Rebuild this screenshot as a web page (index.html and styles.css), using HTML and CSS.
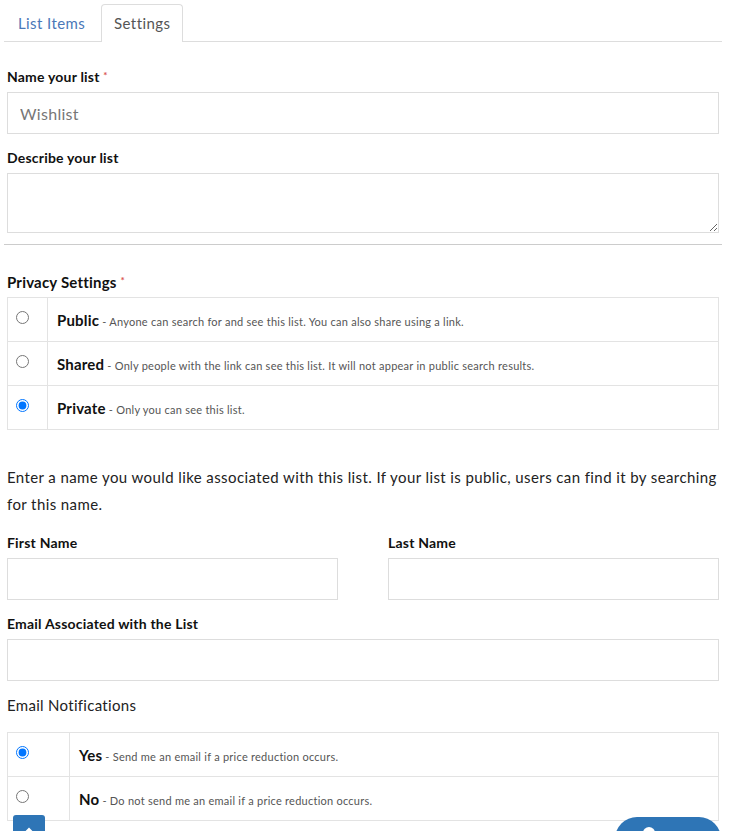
FILE: index.html
```html
<!DOCTYPE html>
<html lang="en">
<head>
<meta charset="utf-8">
<title>List Settings</title>
<link rel="stylesheet" href="styles.css">
</head>
<body>
<div class="page">
  <ul class="tabs">
    <li class="tab"><a href="#">List Items</a></li>
    <li class="tab active"><a href="#">Settings</a></li>
  </ul>
  <form class="form">
    <div class="group">
      <label class="label">Name your list <span class="req">*</span></label>
      <input class="control" type="text" placeholder="Wishlist">
    </div>
    <div class="group">
      <label class="label">Describe your list</label>
      <textarea class="control area"></textarea>
    </div>
    <hr class="rule">
    <div class="group privacy">
      <label class="label">Privacy Settings <span class="req">*</span></label>
      <table class="opts">
        <tr>
          <td class="radio-cell"><input type="radio" name="privacy"></td>
          <td class="text-cell"><strong>Public</strong><span class="desc"> - Anyone can search for and see this list. You can also share using a link.</span></td>
        </tr>
        <tr>
          <td class="radio-cell"><input type="radio" name="privacy"></td>
          <td class="text-cell"><strong>Shared</strong><span class="desc"> - Only people with the link can see this list. It will not appear in public search results.</span></td>
        </tr>
        <tr>
          <td class="radio-cell"><input type="radio" name="privacy" checked></td>
          <td class="text-cell"><strong>Private</strong><span class="desc"> - Only you can see this list.</span></td>
        </tr>
      </table>
    </div>
    <p class="intro">Enter a name you would like associated with this list. If your list is public, users can find it by searching for this name.</p>
    <div class="row">
      <div class="group">
        <label class="label">First Name</label>
        <input class="control" type="text">
      </div>
      <div class="group">
        <label class="label">Last Name</label>
        <input class="control" type="text">
      </div>
    </div>
    <div class="group">
      <label class="label">Email Associated with the List</label>
      <input class="control" type="email">
    </div>
    <div class="notif-title">Email Notifications</div>
    <table class="opts notif">
      <tr>
        <td class="radio-cell"><input type="radio" name="notify" checked></td>
        <td class="text-cell"><strong>Yes</strong><span class="desc"> - Send me an email if a price reduction occurs.</span></td>
      </tr>
      <tr>
        <td class="radio-cell"><input type="radio" name="notify"></td>
        <td class="text-cell"><strong>No</strong><span class="desc"> - Do not send me an email if a price reduction occurs.</span></td>
      </tr>
    </table>
  </form>
</div>
<a class="to-top" href="#" aria-label="Back to top">
  <svg width="12" height="8" viewBox="0 0 12 8"><path d="M1 7 L6 2 L11 7" fill="none" stroke="#fff" stroke-width="2"/></svg>
</a>
<a class="chat" href="#" aria-label="Chat"><span class="chat-dot"></span></a>
</body>
</html>
```
FILE: styles.css
```css
html, body {
  margin: 0;
  padding: 0;
  background: #fff;
  overflow: hidden;
}
body {
  font-family: Lato, "Open Sans", sans-serif;
  color: #222;
  height: 831px;
  position: relative;
}
.page {
  margin-left: 4px;
  width: 718px;
}
.tabs {
  list-style: none;
  margin: 0;
  padding: 4px 0 0 0;
  display: flex;
  border-bottom: 1px solid #ddd;
}
.tab a {
  display: block;
  height: 36px;
  line-height: 36px;
  padding: 0 13px;
  font-size: 15px;
  letter-spacing: 0.4px;
  text-decoration: none;
  color: #4a78b8;
  border: 1px solid transparent;
  border-bottom: none;
  border-radius: 4px 4px 0 0;
  margin-bottom: -1px;
}
.tab.active a {
  color: #555;
  background: #fff;
  border-color: #ddd;
  height: 37px;
  padding: 0 12px;
}
.tab:first-child a { padding-left: 13px; padding-right: 15px; }
.form {
  padding: 25px 3px 0 3px;
}
.group {
  margin-bottom: 14px;
}
.label {
  display: block;
  font-size: 14px;
  font-weight: 700;
  line-height: 20px;
  letter-spacing: 0.2px;
  color: #111;
  margin-bottom: 5px;
}
.req {
  color: #d9534f;
  font-size: 10px;
  vertical-align: top;
  position: relative;
  top: -2px;
}
.control {
  display: block;
  box-sizing: border-box;
  width: 100%;
  height: 42px;
  border: 1px solid #ddd;
  border-radius: 0;
  padding: 0 12px;
  font-family: Lato, "Open Sans", sans-serif;
  font-size: 16px;
  letter-spacing: 0.3px;
  color: #555;
  background: #fff;
  margin: 0;
}
.control::placeholder {
  color: #777;
}
.area {
  height: 60px;
  resize: vertical;
}
.group:has(.area) {
  margin-bottom: 11px;
}
.rule {
  border: none;
  border-top: 1px solid #ccc;
  margin: 0 -3px 27px -3px;
}
.privacy .label {
  font-size: 15px;
}
.opts {
  width: 100%;
  border-collapse: collapse;
  border: 1px solid #e3e3e3;
}
.opts td {
  border: 1px solid #e3e3e3;
  height: 43px;
  padding: 0;
  vertical-align: middle;
}
.radio-cell {
  width: 40px;
  box-sizing: border-box;
  padding-left: 8px !important;
}
.radio-cell input {
  margin: 0;
  position: relative;
  top: -2px;
  display: block;
}
.text-cell {
  padding-left: 9px !important;
}
.text-cell strong {
  font-size: 15px;
  font-weight: 700;
  letter-spacing: 0.2px;
  color: #111;
}
.desc {
  font-size: 11px;
  letter-spacing: 0.25px;
  color: #555;
}
.privacy {
  margin-bottom: 0;
}
.intro {
  font-size: 15px;
  line-height: 27px;
  letter-spacing: 0.4px;
  color: #222;
  margin: 34px 0 15px 0;
}
.row {
  display: grid;
  grid-template-columns: 331px 331px;
  column-gap: 50px;
}
.notif-title {
  font-size: 15px;
  line-height: 20px;
  letter-spacing: 0.3px;
  color: #222;
  margin-top: 15px;
  margin-bottom: 17px;
}
.group + .notif-title { margin-top: 1px; }
.notif .radio-cell {
  width: 62px;
}
.to-top {
  position: absolute;
  left: 13px;
  top: 815px;
  width: 32px;
  height: 32px;
  background: #2e75b6;
  border-radius: 3px;
  display: flex;
  justify-content: center;
  padding-top: 12px;
  box-sizing: border-box;
}
.chat {
  position: absolute;
  left: 615px;
  top: 817px;
  width: 106px;
  height: 44px;
  background: #2e75b6;
  border-radius: 22px;
}
.chat-dot {
  position: absolute;
  left: 28px;
  top: 10px;
  width: 12px;
  height: 12px;
  border-radius: 50%;
  background: #fff;
}
```
